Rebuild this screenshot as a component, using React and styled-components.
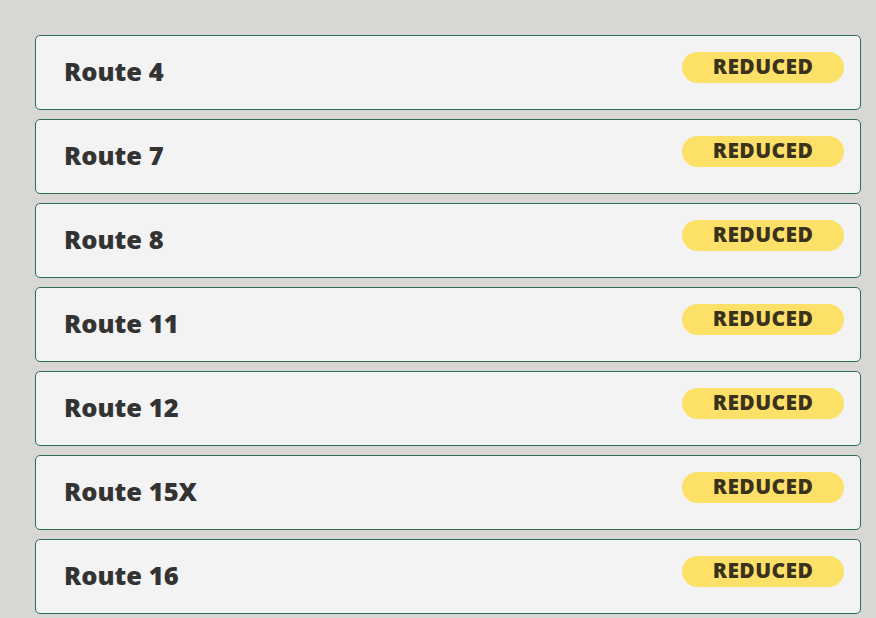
import React from 'react';
import styled, { createGlobalStyle } from 'styled-components';

const GlobalStyle = createGlobalStyle`
  body {
    margin: 0;
    background: #d8d7d3;
    font-family: "Open Sans", "Noto Sans", sans-serif;
  }
`;

const List = styled.div`
  display: flex;
  flex-direction: column;
  gap: 9px;
  padding: 35px 15px 20px 35px;
`;

const Card = styled.div`
  display: flex;
  justify-content: space-between;
  align-items: center;
  height: 75px;
  box-sizing: border-box;
  padding: 0 16px 0 28px;
  background: #f3f3f3;
  border: 1px solid #2b6d58;
  border-radius: 5px;
`;

const Name = styled.h3`
  margin: 0 0 4px;
  font-size: 25.5px;
  font-weight: 800;
  color: #333;
`;

const Badge = styled.span`
  align-self: flex-start;
  margin-top: 16px;
  width: 162px;
  height: 31px;
  display: flex;
  align-items: center;
  justify-content: center;
  border-radius: 16px;
  background: #fde068;
  color: #3a321d;
  font-size: 21px;
  font-weight: 800;
  letter-spacing: 0.4px;
  line-height: 1;
  padding-bottom: 2px;
  box-sizing: border-box;
`;

const routes = ['4', '7', '8', '11', '12', '15X', '16'];

export default function App() {
  return (
    <>
      <GlobalStyle />
      <List>
        {routes.map((r) => (
          <Card key={r}>
            <Name>Route {r}</Name>
            <Badge>REDUCED</Badge>
          </Card>
        ))}
      </List>
    </>
  );
}
